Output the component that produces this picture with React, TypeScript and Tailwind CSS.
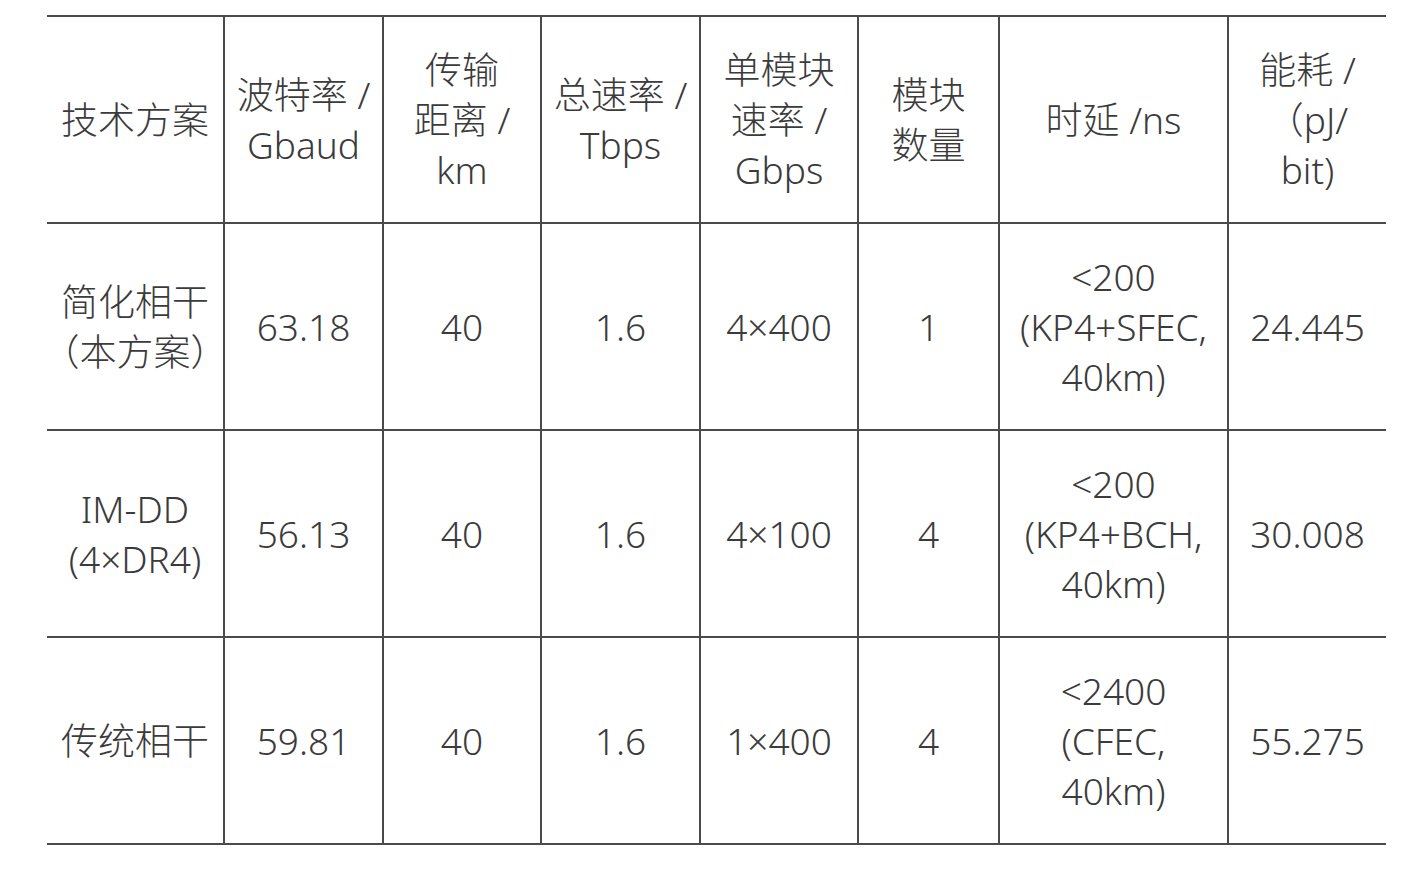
import type { ReactNode } from 'react';

const widths = ['w-[176px]', 'w-[159px]', 'w-[158px]', 'w-[159px]', 'w-[158px]', 'w-[141px]', 'w-[229px]', 'w-[159px]'];

const header: ReactNode[] = [
  <>技术方案</>,
  <>波特率 /<br />Gbaud</>,
  <>传输<br />距离 /<br />km</>,
  <>总速率 /<br />Tbps</>,
  <>单模块<br />速率 /<br />Gbps</>,
  <>模块<br />数量</>,
  <>时延 /ns</>,
  <>能耗 /<br />（pJ/<br />bit)</>,
];

const rows: ReactNode[][] = [
  [<>简化相干<br />（本方案）</>, '63.18', '40', '1.6', '4×400', '1', <>&lt;200<br />(KP4+SFEC,<br />40km)</>, '24.445'],
  [<>IM-DD<br />(4×DR4)</>, '56.13', '40', '1.6', '4×100', '4', <>&lt;200<br />(KP4+BCH,<br />40km)</>, '30.008'],
  [<>传统相干</>, '59.81', '40', '1.6', '1×400', '4', <>&lt;2400<br />(CFEC,<br />40km)</>, '55.275'],
];

function Row({ cells, first }: { cells: ReactNode[]; first?: boolean }) {
  return (
    <div
      className={`flex border-b-2 border-[#4a4a4a] ${first ? 'border-t-2 h-[209px]' : 'h-[207px]'}`}
    >
      {cells.map((c, i) => (
        <div
          key={i}
          className={`${widths[i]} shrink-0 flex items-center justify-center text-center whitespace-nowrap ${
            i > 0 ? 'border-l-2 border-[#4a4a4a]' : ''
          }`}
        >
          <div>{c}</div>
        </div>
      ))}
    </div>
  );
}

export default function App() {
  return (
    <div
      className="w-[1420px] h-[870px] bg-white pt-[15px] pl-[47px] text-[#3b3b3b] text-[37px] leading-[50px] font-light"
      style={{ fontFamily: '"Noto Sans", "Noto Sans CJK SC", sans-serif' }}
    >
      <div className="w-[1339px]">
        <Row cells={header} first />
        {rows.map((r, i) => (
          <Row key={i} cells={r} />
        ))}
      </div>
    </div>
  );
}
